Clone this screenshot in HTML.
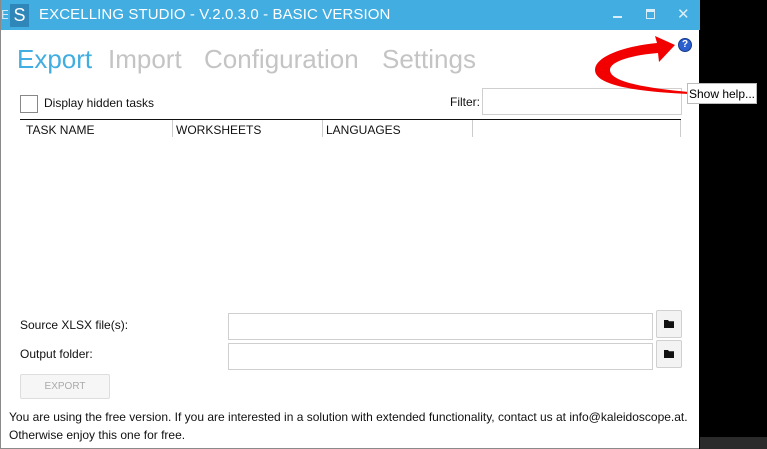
<!DOCTYPE html>
<html><head><style>
body{margin:0;width:767px;height:449px;background:#000;position:relative;overflow:hidden;font-family:"Segoe UI","Liberation Sans",sans-serif;}
.win{position:absolute;left:0;top:0;width:699px;height:449px;background:#fff;border-left:1px solid #8a8a8a;box-sizing:border-box;border-bottom:1px solid #8a8a8a}
.title{position:absolute;left:0;top:0;width:699px;height:30px;background:#41ade0;color:#fff;font-size:15px}
.abs{position:absolute}
.tab{position:absolute;top:44px;font-size:26px;color:#c4c4c4}
.lbl{font-size:12px;color:#111;position:absolute}
.box{position:absolute;border:1px solid #cfcfcf;background:#fff}
.btn{position:absolute;width:24px;height:26px;border:1px solid #d0d0d0;background:#f3f3f3;border-radius:2px}
</style></head><body>
<div class="win">
 <div class="title">
  <div class="abs" style="left:0px;top:4px;width:7px;height:22px;color:#cfe9f7;font-size:13px;line-height:22px;overflow:hidden">E</div>
  <div class="abs" style="left:9px;top:4px;width:19px;height:23px;background:#2f86b8;color:#fff;font-size:18px;line-height:23px;text-align:center">S</div>
  <div class="abs" style="left:38px;top:6px;letter-spacing:0.1px">EXCELLING STUDIO - V.2.0.3.0 - BASIC VERSION</div>
  <div class="abs" style="left:612px;top:16px;width:9px;height:2px;background:#d8eefa"></div>
  <div class="abs" style="left:645px;top:9px;width:7px;height:6px;border:1px solid #d8eefa;border-top-width:3px"></div>
  <div class="abs" style="left:676px;top:5px;color:#d8eefa;font-size:15px">✕</div>
 </div>
 <div class="tab" style="left:16px;color:#41ade0">Export</div>
 <div class="tab" style="left:107px">Import</div>
 <div class="tab" style="left:203px">Configuration</div>
 <div class="tab" style="left:381px">Settings</div>
 <div class="box" style="left:19px;top:95px;width:16px;height:16px;border-color:#888"></div>
 <div class="lbl" style="left:43px;top:96px">Display hidden tasks</div>
 <div class="lbl" style="left:449px;top:95px">Filter:</div>
 <div class="box" style="left:481px;top:88px;width:198px;height:25px"></div>
 <div class="abs" style="left:19px;top:119px;width:661px;height:1px;background:#111"></div>
 <div class="abs" style="left:679px;top:120px;width:1px;height:17px;background:#ccc"></div>
 <div class="abs" style="left:171px;top:120px;width:1px;height:17px;background:#ccc"></div>
 <div class="abs" style="left:321px;top:120px;width:1px;height:17px;background:#ccc"></div>
 <div class="abs" style="left:471px;top:120px;width:1px;height:17px;background:#ccc"></div>
 <div class="lbl" style="left:25px;top:123px">TASK NAME</div>
 <div class="lbl" style="left:175px;top:123px">WORKSHEETS</div>
 <div class="lbl" style="left:325px;top:123px">LANGUAGES</div>
 <div class="lbl" style="left:19px;top:318px">Source XLSX file(s):</div>
 <div class="lbl" style="left:19px;top:347px">Output folder:</div>
 <div class="box" style="left:227px;top:313px;width:423px;height:25px"></div>
 <div class="box" style="left:227px;top:343px;width:423px;height:25px"></div>
 <div class="btn" style="left:655px;top:310px"><div class="abs" style="left:7px;top:9px;width:10px;height:8px;background:#111;clip-path:polygon(0 0,40% 0,50% 15%,100% 15%,100% 100%,0 100%)"></div></div>
 <div class="btn" style="left:655px;top:340px"><div class="abs" style="left:7px;top:9px;width:10px;height:8px;background:#111;clip-path:polygon(0 0,40% 0,50% 15%,100% 15%,100% 100%,0 100%)"></div></div>
 <div class="abs" style="left:19px;top:374px;width:88px;height:23px;border:1px solid #ddd;border-radius:2px;background:#f6f6f6;color:#aaa;font-size:10px;text-align:center;line-height:23px">EXPORT</div>
 <div class="lbl" style="left:8px;top:410px">You are using the free version. If you are interested in a solution with extended functionality, contact us at info@kaleidoscope.at.</div>
 <div class="lbl" style="left:8px;top:428px">Otherwise enjoy this one for free.</div>
 <div class="abs" style="left:677px;top:38px;width:12px;height:12px;border-radius:50%;background:#2a5fd0;border:1px solid #173a8a;color:#fff;font-size:10px;font-weight:bold;text-align:center;line-height:12px">?</div>
 <svg class="abs" style="left:590px;top:34px" width="100" height="64"><path d="M84 11 L64 2 L66 9 C35 12 4 22 4 36 C4 52 50 58 98 60 L98 58 C55 54 19 48 19 36 C19 27 42 21 67 19 L68 28 Z" fill="#f20000"/></svg>
</div>
<div class="abs" style="left:700px;top:437px;width:67px;height:12px;background:#2b2b2b"></div>
<div class="abs" style="left:687px;top:83px;width:70px;height:21px;background:#fff;border:1px solid #bbb;font-size:12px;line-height:21px;text-align:center;box-sizing:border-box">Show help...</div>
</body></html>
